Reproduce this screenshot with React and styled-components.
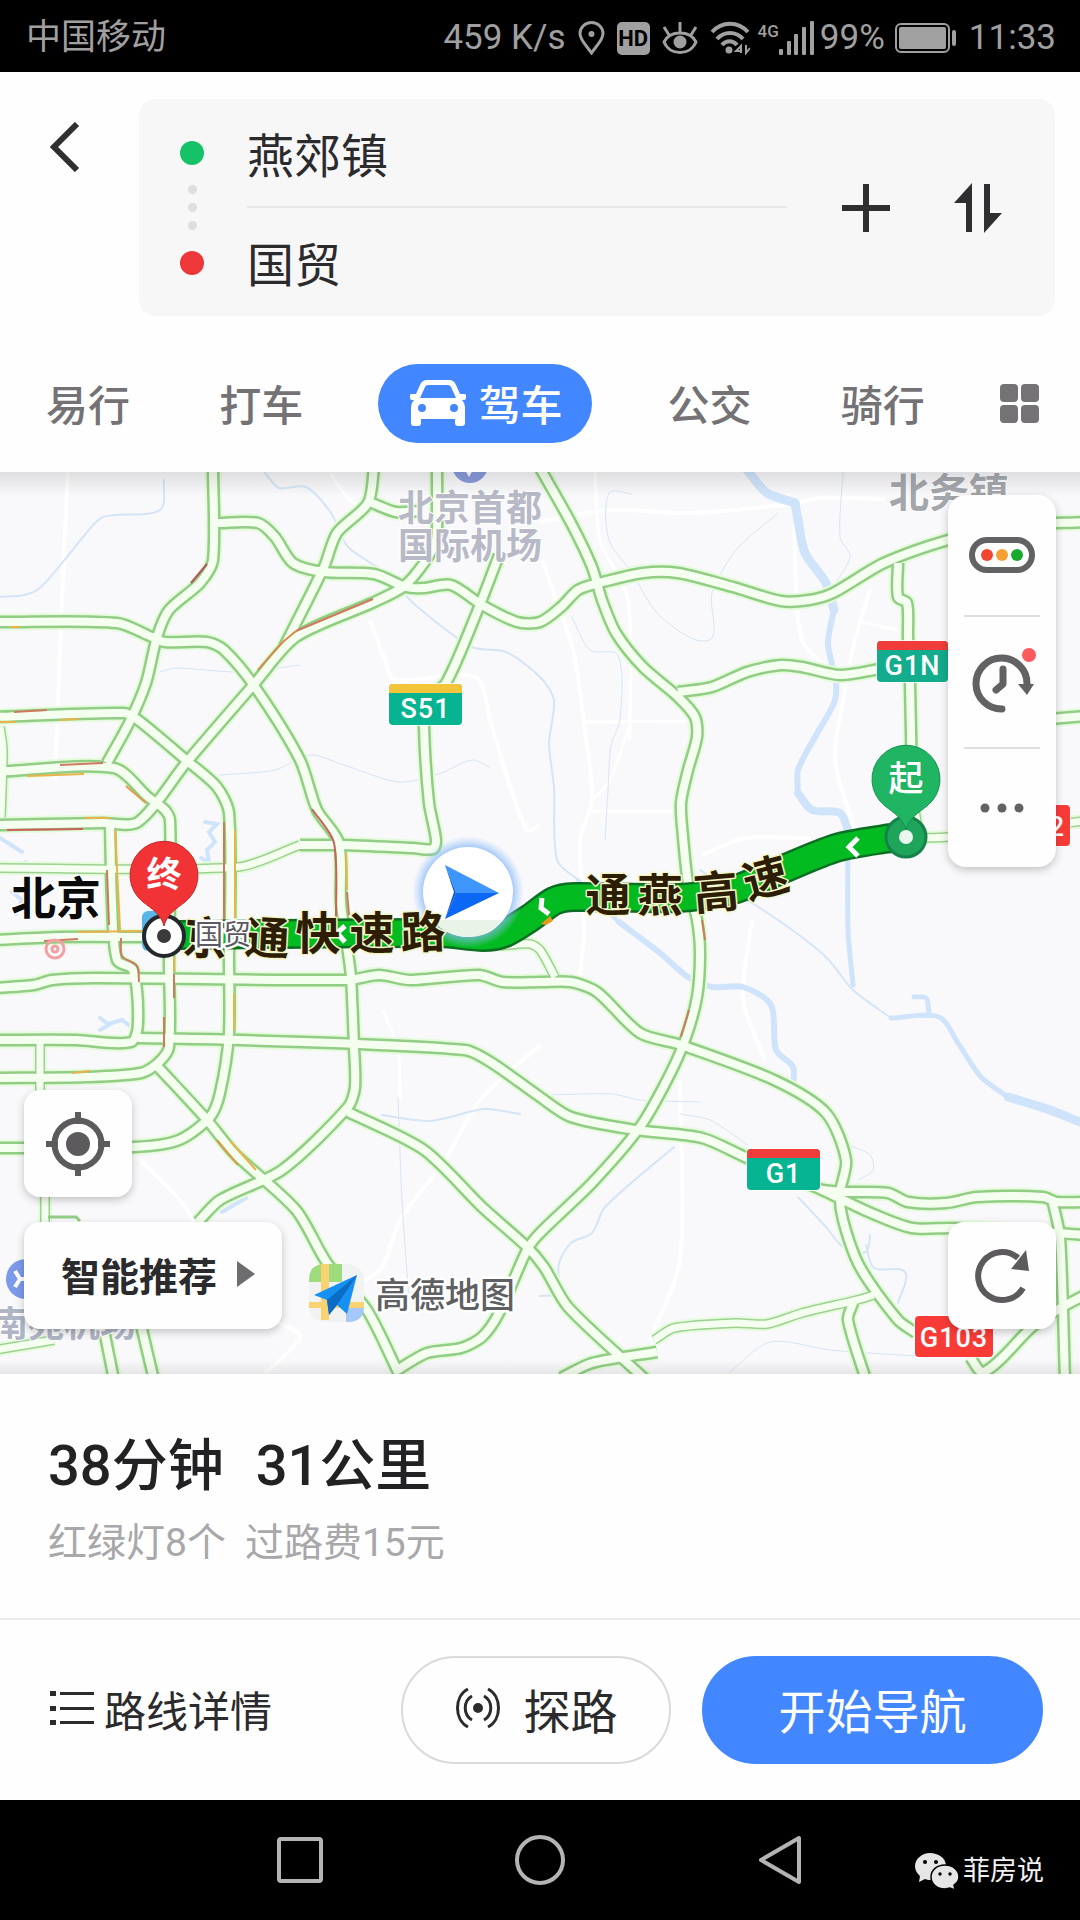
import React from "react";
import styled, { createGlobalStyle } from "styled-components";

const GlobalStyle = createGlobalStyle`
  *, *::before, *::after { box-sizing: border-box; }
  body {
    margin: 0;
    background: #fefefe;
    color: #2b2a2c;
    font-family: Roboto, "Noto Sans CJK SC", sans-serif;
  }
  button, input { font: inherit; color: inherit; }
  svg { display: block; }
`;

const Screen = styled.div`
  display: flex;
  flex-direction: column;
  min-height: 100vh;
`;

const Button = styled.button`
  display: flex;
  align-items: center;
  justify-content: center;
  flex: none;
  margin: 0;
  padding: 0;
  border: 0;
  background: none;
  cursor: pointer;
`;

/* ---------- status bar ---------- */

const StatusBar = styled.div`
  display: flex;
  align-items: center;
  justify-content: space-between;
  height: 72px;
  padding: 4px 24px 0 26px;
  background: #000;
  color: #a0a0a0;
  font-size: 35px;
  line-height: 44px;
  white-space: nowrap;
`;

const StatusGroup = styled.div`
  display: flex;
  align-items: center;
  gap: ${(p) => p.$gap}px;
`;

const HdBadge = styled.span`
  width: 33px;
  height: 33px;
  border-radius: 5px;
  background: #a0a0a0;
  color: #000;
  font-size: 22px;
  font-weight: 700;
  line-height: 33px;
  text-align: center;
`;

const NetworkType = styled.span`
  align-self: flex-start;
  font-size: 17px;
  font-weight: 500;
  line-height: 20px;
`;

/* ---------- header ---------- */

const Header = styled.header`
  display: flex;
  flex-direction: column;
  gap: 48px;
  padding: 27px 25px 29px 32px;
`;

const SearchRow = styled.div`
  display: flex;
  align-items: flex-start;
`;

const BackButton = styled(Button)`
  width: 66px;
  height: 96px;
  margin-right: 41px;
`;

const RouteCard = styled.form`
  display: flex;
  flex: 1;
  min-width: 0;
  align-items: center;
  height: 217px;
  padding: 0 47px 0 41px;
  border-radius: 16px;
  background: #f8f7f8;
`;

const Stops = styled.div`
  display: flex;
  flex-direction: column;
  align-items: center;
  justify-content: space-between;
  height: 134px;
  margin-right: 43px;
`;

const StopDot = styled.span`
  width: 24px;
  height: 24px;
  border-radius: 50%;
  background: ${(p) => p.$color};
`;

const StopTrail = styled.span`
  display: flex;
  flex-direction: column;
  gap: 9px;
`;

const TrailDot = styled.span`
  width: 9px;
  height: 9px;
  border-radius: 50%;
  background: #dedede;
`;

const Fields = styled.div`
  flex: 1;
  min-width: 0;
`;

const PlaceInput = styled.input`
  display: block;
  width: 100%;
  height: 108px;
  padding: 0;
  border: 0;
  border-bottom: ${(p) => (p.$divided ? "2px solid #e8e7e8" : "0")};
  outline: 0;
  background: transparent;
  font-size: 47px;
`;

const CardActions = styled.div`
  display: flex;
  gap: 52px;
  margin-left: 49px;
`;

const IconButton = styled(Button)`
  width: 60px;
  height: 60px;
`;

const Tabs = styled.nav`
  display: flex;
  align-items: center;
  justify-content: space-between;
  padding-right: 16px;
`;

const Tab = styled(Button)`
  gap: 12px;
  height: 79px;
  padding: ${(p) => (p.$active ? "0 30px 2px 32px" : "0 14px 2px")};
  border-radius: 40px;
  background: ${(p) => (p.$active ? "#4287ff" : "none")};
  color: ${(p) => (p.$active ? "#fff" : "#747275")};
  font-size: 42px;
  font-weight: 500;
`;

const MoreModes = styled(Button)`
  display: grid;
  grid-template-columns: 18px 18px;
  gap: 3px;
`;

const Tile = styled.span`
  height: 18px;
  border-radius: 4px;
  background: #747275;
`;

/* ---------- map ---------- */

const MapArea = styled.main`
  position: relative;
  background: #f9f9fb;
`;

const MapCanvas = styled.svg`
  width: 100%;
  height: auto;
`;

const MapLabel = styled.text`
  font-size: ${(p) => p.$size}px;
  font-weight: ${(p) => p.$weight || 700};
  fill: ${(p) => p.$fill};
  stroke: ${(p) => p.$halo || "#fff"};
  stroke-width: ${(p) => p.$haloWidth || 3}px;
  stroke-linejoin: round;
  paint-order: stroke;
  text-anchor: middle;
  dominant-baseline: central;
`;

const ShieldText = styled.text`
  font-size: 27px;
  font-weight: 500;
  letter-spacing: 1px;
  fill: #fff;
  text-anchor: middle;
`;

const TopShade = styled.div`
  position: absolute;
  inset: 0 0 auto;
  height: 24px;
  background: linear-gradient(rgba(60, 60, 60, 0.14), rgba(60, 60, 60, 0));
`;

const BottomShade = styled.div`
  position: absolute;
  inset: auto 0 0;
  height: 14px;
  background: linear-gradient(rgba(60, 60, 60, 0), rgba(60, 60, 60, 0.1));
`;

const Floating = styled.div`
  position: absolute;
  display: flex;
  flex-direction: column;
  gap: 25px;
  left: ${(p) => (p.$side === "left" ? "24px" : "auto")};
  right: ${(p) => (p.$side === "right" ? "24px" : "auto")};
  top: ${(p) => (p.$edge === "top" ? "23px" : "auto")};
  bottom: ${(p) => (p.$edge === "bottom" ? "45px" : "auto")};
`;

const FloatButton = styled(Button)`
  width: ${(p) => (p.$wide ? 258 : 108)}px;
  height: 107px;
  padding: ${(p) => (p.$wide ? "0 0 4px 10px" : "0")};
  gap: 20px;
  border-radius: 16px;
  background: #fefefe;
  box-shadow: 0 3px 8px rgba(0, 0, 0, 0.22);
  font-size: 39px;
  font-weight: 700;
`;

const ToolPanel = styled.div`
  width: 108px;
  padding: 0 16px;
  border-radius: 18px;
  background: #fefefe;
  box-shadow: 0 3px 8px rgba(0, 0, 0, 0.22);
`;

const ToolButton = styled(Button)`
  width: 100%;
  height: ${(p) => (p.$tall ? 132 : 120)}px;
  border-top: ${(p) => (p.$divided ? "2px solid #dedede" : "0")};
`;

/* ---------- summary ---------- */

const Summary = styled.section`
  padding: 57px 48px 0;
  height: 244px;
`;

const SummaryTitle = styled.h1`
  display: flex;
  gap: 32px;
  margin: 0;
  font-size: 56px;
  font-weight: 500;
  line-height: 70px;
  color: #222123;
`;

const SummaryNote = styled.p`
  display: flex;
  gap: 19px;
  margin: 14px 0 0;
  font-size: 39px;
  line-height: 56px;
  color: #a8a7a9;
`;

const Footer = styled.footer`
  display: flex;
  align-items: center;
  gap: 31px;
  padding: 36px 37px 36px 50px;
  border-top: 2px solid #ececec;
`;

const DetailsButton = styled(Button)`
  gap: 10px;
  margin-right: auto;
  padding-bottom: 4px;
  font-size: 42px;
`;

const PillButton = styled(Button)`
  width: ${(p) => (p.$primary ? 341 : 270)}px;
  height: 108px;
  gap: 23px;
  padding-bottom: 4px;
  border: 2px solid ${(p) => (p.$primary ? "#4287ff" : "#dad9de")};
  border-radius: 54px;
  background: ${(p) => (p.$primary ? "#4287ff" : "#fefefe")};
  color: ${(p) => (p.$primary ? "#fff" : "#2b2a2c")};
  font-size: 47px;
`;

const SystemNav = styled.nav`
  position: relative;
  display: flex;
  align-items: center;
  justify-content: center;
  gap: 180px;
  height: 120px;
  background: #000;
`;

const Watermark = styled.div`
  position: absolute;
  right: 36px;
  bottom: 29px;
  display: flex;
  align-items: center;
  gap: 4px;
  color: #f0f0f0;
  font-size: 27px;
  line-height: 40px;
`;

/* ---------- map data ---------- */

// Smooth line through a flat list of x, y pairs.
function curve(flat) {
  const p = [];
  for (let i = 0; i < flat.length; i += 2) p.push([flat[i], flat[i + 1]]);
  let d = `M${p[0][0]} ${p[0][1]}`;
  for (let i = 0; i < p.length - 1; i++) {
    const a = p[i - 1] || p[i];
    const b = p[i];
    const c = p[i + 1];
    const e = p[i + 2] || c;
    const len = Math.hypot(c[0] - b[0], c[1] - b[1]);
    const l1 = Math.hypot(c[0] - a[0], c[1] - a[1]) || 1;
    const l2 = Math.hypot(e[0] - b[0], e[1] - b[1]) || 1;
    const k = len * 0.27;
    d += `C${b[0] + ((c[0] - a[0]) / l1) * k} ${b[1] + ((c[1] - a[1]) / l1) * k} ${
      c[0] - ((e[0] - b[0]) / l2) * k
    } ${c[1] - ((e[1] - b[1]) / l2) * k} ${c[0]} ${c[1]}`;
  }
  return d;
}

const roads = [
  [213, 468, 213, 560, 200, 583, 169, 610, 157, 637, 146, 683, 129, 723, 107, 763],
  [218, 523, 258, 523, 275, 537, 293, 563, 324, 572, 374, 574, 406, 587, 424, 588, 451, 585, 482, 605, 517, 622, 540, 622, 561, 607, 578, 590, 599, 583, 643, 573, 678, 573, 733, 587, 781, 601, 809, 600, 833, 593, 884, 563, 948, 540, 1010, 526, 1085, 522],
  [540, 468, 571, 523, 592, 567, 602, 600, 616, 633, 643, 667, 678, 697, 695, 717, 697, 737, 688, 770, 681, 803, 683, 837, 688, 883, 697, 920, 700, 953, 697, 997, 685, 1040, 667, 1080, 640, 1127, 592, 1183, 540, 1233, 527, 1250, 499, 1313, 482, 1337, 461, 1348, 427, 1353, 394, 1372],
  [374, 468, 368, 503, 337, 533, 324, 567, 289, 637, 284, 647],
  [372, 503, 396, 512, 420, 511],
  [437, 468, 437, 507, 436, 540, 424, 563, 403, 587, 372, 603, 296, 637, 255, 683, 186, 763, 138, 822, 103, 823, -5, 825],
  [499, 555, 479, 607, 446, 683, 426, 700, 424, 727, 429, 803, 436, 840, 433, 849, 413, 848, 341, 845, 300, 845],
  [-5, 622, 117, 623, 152, 637, 165, 642, 207, 642, 224, 650, 255, 687, 300, 760, 317, 810, 339, 843, 341, 903, 348, 953, 351, 977, 354, 1047, 355, 1087, 348, 1107, 282, 1170, 220, 1200, 198, 1222],
  [-5, 717, 124, 713, 138, 720, 186, 760, 217, 787, 229, 813, 230, 930, 229, 953, 229, 1033, 220, 1093, 210, 1117, 179, 1140, 134, 1147, -5, 1148],
  [-5, 772, 114, 768, 148, 797, 165, 810, 170, 820, 170, 900, 169, 960, 169, 1047, 158, 1063, 141, 1073, 86, 1077, -5, 1078],
  [110, 823, 112, 903, 117, 960, 133, 970, 138, 1023, 131, 1042, 76, 1040, -5, 1040],
  [-5, 940, 60, 937, 155, 937],
  [-5, 988, 34, 985, 52, 980, 96, 978, 348, 980, 379, 975, 410, 980, 479, 975, 503, 982, 540, 982, 571, 982, 597, 992, 640, 1033, 681, 1045, 774, 1080, 826, 1113, 846, 1160, 840, 1193, 843, 1220, 860, 1267, 898, 1320, 916, 1333],
  [138, 1038, 241, 1040, 465, 1050, 492, 1063, 540, 1097, 571, 1117, 636, 1130, 702, 1138, 745, 1157, 822, 1190, 871, 1213, 912, 1228, 953, 1228, 1057, 1233, 1085, 1235],
  [822, 1190, 846, 1192, 888, 1193, 908, 1202, 946, 1203, 977, 1197, 1043, 1197, 1057, 1202, 1085, 1202],
  [1053, 1203, 1060, 1237, 1065, 1380],
  [158, 1067, 207, 1120, 234, 1153, 296, 1210, 327, 1263, 367, 1310, 398, 1372],
  [348, 1112, 424, 1150, 482, 1207, 527, 1247, 544, 1267, 568, 1307, 646, 1380],
  [561, 1378, 592, 1363, 657, 1352],
  [853, 1303, 848, 1320, 866, 1380],
  [970, 1357, 984, 1372, 1032, 1327, 1057, 1310, 1085, 1295],
  [105, 1335, 114, 1380],
  [141, 1325, 154, 1380],
  [898, 563, 898, 597, 907, 603, 908, 637, 910, 683, 912, 790],
  [678, 692, 712, 687, 747, 672, 781, 665, 802, 667, 840, 675, 880, 669],
  [1050, 719, 1085, 716],
];

const minorRoads = [
  [300, 845, 238, 867, -5, 868],
  [654, 1340, 674, 1328, 736, 1323, 767, 1324, 802, 1313, 857, 1300, 874, 1295],
  [40, 1043, 40, 1092],
  [45, 1190, 45, 1224],
  [0, 727, 3, 750, 1, 817],
  [-5, 1350, 54, 1340],
  [500, 946, 530, 944, 540, 950, 555, 977],
  [920, 838, 948, 837, 1085, 821],
  [912, 790, 918, 830],
];

const traffic = [
  ["#cf7a60", [296, 631, 373, 599]],
  ["#d98a4e", [258, 670, 282, 643, 296, 631]],
  ["#b5555a", [191, 583, 207, 564]],
  ["#c9635c", [312, 809, 334, 843, 336, 925]],
  ["#eab24c", [346, 853, 347, 890]],
  ["#cf7a60", [347, 892, 349, 915]],
  ["#eab24c", [235, 830, 235, 925]],
  ["#cf7a60", [224, 822, 224, 925]],
  ["#eab24c", [234, 993, 234, 1030]],
  ["#eab24c", [115, 830, 120, 930]],
  ["#cf7a60", [107, 870, 109, 925]],
  ["#cf7a60", [121, 938, 122, 956, 137, 966, 139, 982]],
  ["#eab24c", [174, 957, 174, 972]],
  ["#cf7a60", [174, 974, 174, 998]],
  ["#cf7a60", [164, 1017, 164, 1047]],
  ["#eab24c", [230, 1141, 256, 1170]],
  ["#e09a4c", [217, 1140, 238, 1165]],
  ["#cf7a60", [14, 712, 47, 710]],
  ["#eab24c", [60, 720, 78, 719]],
  ["#eab24c", [0, 722, 16, 722]],
  ["#cf7a60", [60, 765, 103, 763]],
  ["#eab24c", [27, 776, 84, 774]],
  ["#e09a4c", [126, 786, 146, 803]],
  ["#c9635c", [7, 830, 83, 829]],
  ["#eab24c", [84, 818, 110, 818]],
  ["#cf7a60", [702, 920, 705, 940]],
  ["#cf7a60", [689, 1010, 681, 1037]],
  ["#cf7a60", [44, 941, 78, 939]],
  ["#eab24c", [78, 932, 145, 931]],
  ["#eab24c", [72, 1073, 90, 1071]],
  ["#eab24c", [10, 627, 20, 627]],
];

const rivers = [
  [9, [747, 470, 767, 493, 795, 503]],
  [9, [795, 503, 798, 520, 805, 553, 826, 583, 834, 610]],
  [6, [834, 610, 828, 643, 836, 683, 834, 703, 815, 737, 798, 770, 798, 793]],
  [8, [798, 793, 812, 810, 840, 813, 848, 830]],
  [5, [848, 830, 848, 930, 853, 985]],
  [4, [578, 880, 600, 905, 619, 922]],
  [6, [619, 922, 660, 953, 688, 977, 712, 987, 743, 987, 771, 1005, 776, 1050, 793, 1067, 793, 1090]],
  [2, [700, 870, 778, 920, 826, 957, 853, 990, 891, 1018]],
  [5, [891, 1018, 939, 1017, 958, 1043, 981, 1077, 1008, 1097]],
  [9, [1008, 1097, 1050, 1110, 1085, 1124]],
  [5, [929, 1013, 926, 998, 914, 997]],
  [2, [164, 480, 160, 510, 103, 517, 83, 537, 71, 552, 41, 587, 24, 595, 0, 597]],
  [2, [265, 473, 279, 488, 306, 487, 331, 513, 348, 547, 386, 573, 413, 603, 472, 647, 506, 652, 540, 677, 554, 700, 549, 743, 554, 787, 557, 860, 578, 880]],
  [1, [220, 775, 275, 770, 310, 755, 344, 765, 399, 782, 441, 773, 472, 760, 489, 767]],
  [1, [160, 672, 175, 668, 240, 672, 300, 665]],
  [1, [632, 494, 609, 493, 609, 540, 630, 570, 661, 617, 709, 640, 712, 593, 736, 550, 778, 513]],
  [1, [843, 473, 840, 537, 850, 557, 833, 587]],
  [1, [572, 617, 590, 650, 618, 655, 620, 720, 611, 745, 608, 790, 605, 840]],
  [2, [674, 1147, 605, 1207, 592, 1233, 571, 1243, 559, 1263, 557, 1293, 540, 1296]],
  [2, [798, 1197, 826, 1227, 843, 1247, 866, 1252, 870, 1235]],
  [2, [866, 1245, 874, 1268, 905, 1272, 898, 1303]],
  [1, [793, 1090, 826, 1102, 846, 1142, 870, 1155, 873, 1170, 858, 1180]],
  [1, [545, 1095, 612, 1094, 640, 1100, 700, 1102]],
  [1, [680, 1114, 710, 1120, 748, 1145]],
  [2, [382, 1115, 430, 1121, 484, 1109, 520, 1114]],
  [1, [398, 1098, 402, 1200, 409, 1300]],
  [1, [730, 1372, 770, 1342, 830, 1350, 915, 1356]],
];

const lanes = [
  [3, [68, 470, 62, 600, 55, 780]],
  [2, [330, 473, 350, 500, 372, 510]],
  [3, [370, 620, 385, 660, 395, 680, 475, 677, 490, 720, 505, 770, 527, 830, 540, 825]],
  [3, [540, 522, 610, 510, 690, 513, 790, 504, 820, 498, 885, 499]],
  [2, [595, 470, 600, 540, 628, 600, 630, 740]],
  [3, [542, 560, 573, 650, 585, 730, 592, 800, 580, 840, 584, 930, 580, 975]],
  [2, [582, 722, 700, 721]],
  [2, [590, 811, 680, 811]],
  [2, [592, 800, 610, 780, 630, 725]],
  [3, [795, 506, 795, 560, 802, 640, 830, 670]],
  [3, [870, 590, 855, 640, 845, 690, 835, 760, 855, 830]],
  [2, [862, 622, 905, 632]],
  [3, [752, 920, 743, 1000, 765, 1060]],
  [3, [680, 1080, 680, 1260, 650, 1340]],
  [3, [540, 1045, 480, 1100, 445, 1160, 400, 1220, 380, 1270, 340, 1290]],
  [3, [270, 1320, 300, 1335, 290, 1350, 265, 1374]],
  [2, [383, 1010, 398, 1050, 400, 1100]],
  [3, [140, 1160, 180, 1200, 195, 1222]],
  [3, [702, 855, 745, 838, 810, 838]],
];

const routePath = curve([905, 837, 884, 839, 836, 848, 781, 870, 733, 890, 678, 898, 574, 897, 554, 901, 530, 918, 505, 933, 483, 937, 440, 933, 164, 935]);

const routeLetters = [
  ["京", 206, 939, 5],
  ["通", 267, 939, 3],
  ["快", 318, 934, 0],
  ["速", 372, 934, 0],
  ["路", 423, 933, -2],
  ["通", 608, 896, 0],
  ["燕", 660, 896, 0],
  ["高", 716, 893, -5],
  ["速", 766, 879, -15],
];

const placeLabels = [
  ["北京首都", 470, 509, 36, "#b7bac6"],
  ["国际机场", 470, 547, 36, "#b7bac6"],
  ["北务镇", 949, 493, 40, "#a3a6ab"],
  ["南苑机场", 64, 1325, 36, "#b0b5c6"],
];

const shields = [
  { x: 389, y: 684, w: 73, label: "S51", cap: "#f4c53a", body: "#06b491" },
  { x: 877, y: 641, w: 71, label: "G1N", cap: "#f03d3b", body: "#13ac8d" },
  { x: 747, y: 1149, w: 73, label: "G1", cap: "#f03d3b", body: "#06b491" },
  { x: 915, y: 1316, w: 78, label: "G103", body: "#f93b38" },
  { x: 992, y: 805, w: 78, label: "G102", body: "#f93b38" },
];

function Shield({ x, y, w, label, cap, body }) {
  return (
    <g>
      <rect x={x - 1} y={y - 1} width={w + 2} height={43} rx="5" fill="#fff" opacity="0.8" />
      <rect x={x} y={y} width={w} height={41} rx="4" fill={body} />
      {cap && <path d={`M${x} ${y + 9}V${y + 4}q0-4 4-4h${w - 8}q4 0 4 4v5z`} fill={cap} />}
      <ShieldText x={x + w / 2} y={y + (cap ? 34 : 31)}>
        {label}
      </ShieldText>
    </g>
  );
}

function Lines({ list, color, width }) {
  return (
    <g fill="none" stroke={color} strokeWidth={width} strokeLinejoin="round">
      {list.map((r, i) => (
        <path key={i} d={curve(r)} />
      ))}
    </g>
  );
}

function RouteMap() {
  return (
    <MapCanvas viewBox="0 472 1080 902" role="img" aria-label="路线地图">
      <defs>
        <radialGradient id="locator-glow">
          <stop offset="0.75" stopColor="#7fb2f8" stopOpacity="0.9" />
          <stop offset="1" stopColor="#9fc8fb" stopOpacity="0" />
        </radialGradient>
      </defs>
      <rect x="0" y="472" width="1080" height="902" fill="#f9f9fb" />
      <g fill="none" stroke="#fff">
        {lanes.map(([w, pts], i) => (
          <path key={i} d={curve(pts)} strokeWidth={w + 1} />
        ))}
      </g>
      <g fill="none" stroke="#cfe4fb" strokeLinecap="round">
        {rivers.map(([w, pts], i) => (
          <path key={i} d={curve(pts)} strokeWidth={w} stroke={w < 3 ? "#d6e5f6" : "#cfe4fb"} />
        ))}
        <path
          d="M205 822l12 2-8 8 6 10-8 8 2 12-8-4M100 1018l8 6 14-4 8 6M100 1030l10-6M222 1212l24-14M0 838l22 14M12 892l10 8-6 14M26 862l-8 8"
          strokeWidth="4"
        />
      </g>

      <Lines list={minorRoads} color="#e6fbde" width={14} />
      <Lines list={roads} color="#e6fbde" width={17} />
      <Lines list={minorRoads} color="#9dd190" width={10} />
      <Lines list={roads} color="#92cd85" width={13} />
      <Lines list={minorRoads} color="#f5ffef" width={7} />
      <Lines list={roads} color="#f5ffef" width={8} />
      <path d="M48 1217h28l4 4" fill="none" stroke="#92cd85" strokeWidth="3" />
      <g fill="none" strokeWidth="2">
        {traffic.map(([color, pts], i) => (
          <path key={i} d={curve(pts)} stroke={color} />
        ))}
      </g>

      {placeLabels.map(([text, x, y, size, fill]) => (
        <MapLabel key={text} x={x} y={y} $size={size} $fill={fill} $haloWidth={2}>
          {text}
        </MapLabel>
      ))}
      <circle cx="470" cy="465" r="18" fill="#8799dc" />
      <path d="M465 470l4 7 4-7" fill="#fff" />
      <circle cx="26" cy="1279" r="20" fill="#7b9aea" />
      <path d="M15 1271l5 8-5 8M20 1279h8" fill="none" stroke="#fff" strokeWidth="4" />
      <g fill="none" stroke="#f2a0a2">
        <circle cx="55" cy="949" r="9" strokeWidth="3" />
        <circle cx="55" cy="949" r="3" strokeWidth="3" />
      </g>

      {shields.map((s) => (
        <Shield key={s.label} {...s} />
      ))}

      <rect x="142" y="911" width="20" height="40" rx="6" fill="#59b4e8" />
      <path d={routePath} fill="none" stroke="#0b6e22" strokeWidth="30" />
      <path d={routePath} fill="none" stroke="#02bb20" strokeWidth="25" />
      <g fill="none" stroke="#fff" strokeWidth="5">
        <path d="M858 838l-9 9 9 9M542 898l-1 10 8 6M345 926l-8 7 8 9" />
      </g>
      <path d="M541 924l9-8 3 5-7 4z" fill="#e7981f" />

      <circle cx="468" cy="892" r="56" fill="url(#locator-glow)" />
      <circle cx="468" cy="892" r="45" fill="#fff" />
      <path d="M434 920h68c-7 12-20 17-34 17s-28-7-34-17z" fill="#e9f3e8" />
      <path d="M445 865l54 28h-43z" fill="#3e95fb" />
      <path d="M445 919l54-26h-43z" fill="#0a68f5" />
      <path d="M445 865l11 28-11 26 9-27z" fill="#0f56c8" />

      {routeLetters.map(([text, x, y, turn], i) => (
        <MapLabel
          key={i}
          x={x}
          y={y}
          transform={`rotate(${turn} ${x} ${y})`}
          $size={45}
          $fill="#2c1d04"
          $halo="#f3f5c8"
          $haloWidth={3}
        >
          {text}
        </MapLabel>
      ))}

      <MapLabel x="56" y="899" $size={45} $fill="#0a0a0a">
        北京
      </MapLabel>
      <MapLabel x="223" y="935" $size={28} $weight={400} $fill="#5c5a60" $haloWidth={5}>
        国贸
      </MapLabel>

      <circle cx="164" cy="936" r="20" fill="#fff" stroke="#25272b" strokeWidth="4" />
      <circle cx="164" cy="936" r="7" fill="#3b3b3d" />
      <path d="M164 926c-3-12-12-17-21-24a34 34 0 1 1 42 0c-9 7-18 12-21 24z" fill="#f13336" stroke="#c42a2c" />
      <MapLabel x="164" y="875" $size={35} $fill="#fff" $halo="none">
        终
      </MapLabel>

      <circle cx="906" cy="837" r="20" fill="#1fa45c" stroke="#14834a" strokeWidth="3" />
      <path d="M906 830c-3-12-12-17-21-24a34 34 0 1 1 42 0c-9 7-18 12-21 24z" fill="#20b562" stroke="#149152" />
      <circle cx="906" cy="837" r="7" fill="#e9f7ee" />
      <MapLabel x="906" y="779" $size={35} $weight={500} $fill="#fff" $halo="none">
        起
      </MapLabel>

      <g>
        <rect x="309" y="1264" width="55" height="58" rx="16" fill="#f1f3f2" />
        <path d="M309 1282v-2q0-16 16-16h17v18z" fill="#9ddb7c" />
        <path d="M346 1306h18q0 16-16 16h-2z" fill="#a6c8f8" />
        <path d="M309 1302h55v6h-55zM321 1264h8v56h-8z" fill="#fbd272" />
        <path d="M357 1275l-43 20 13 5 2 15 8-10 10 9z" fill="#1690f3" />
        <path d="M357 1275l-30 25 2 15 8-10z" fill="#0b6cc4" />
      </g>
      <MapLabel x="445" y="1296" $size={35} $weight={500} $fill="#5f6063" $haloWidth={5}>
        高德地图
      </MapLabel>
    </MapCanvas>
  );
}

/* ---------- icons ---------- */

const LocationIcon = () => (
  <svg width="27" height="34" viewBox="0 0 27 34" fill="none" stroke="#a0a0a0" strokeWidth="3">
    <path d="M13.500 32C8 24 2 19 2 12.500a11.500 11 0 0 1 23 0C25 19 19 24 13.500 32z" />
    <circle cx="13.500" cy="13" r="3" fill="#a0a0a0" stroke="none" />
  </svg>
);

const EyeIcon = () => (
  <svg width="36" height="34" viewBox="0 0 36 34" fill="none" stroke="#a0a0a0" strokeWidth="3">
    <path d="M2 21C8 9 28 9 34 21 28 35 8 35 2 21zM18 11V1M7 14L2 6M29 14l5-8" />
    <circle cx="18" cy="21" r="6.500" fill="#a0a0a0" stroke="none" />
  </svg>
);

const WifiIcon = () => (
  <svg width="40" height="34" viewBox="0 0 40 34" fill="none" stroke="#a0a0a0" strokeWidth="4">
    <path d="M2 11C12 0 28 0 38 11M7 18C14 10 26 10 33 18M12 24c4-5 11-5 15 0" />
    <circle cx="19" cy="29" r="3.500" fill="#a0a0a0" stroke="none" />
    <path d="M31 32v-7l-5 5h5M36 24v8l4-5" strokeWidth="2" />
  </svg>
);

const SignalIcon = () => (
  <svg width="36" height="34" viewBox="0 0 36 34" fill="#a0a0a0">
    <rect x="0" y="28" width="4" height="6" rx="1" />
    <rect x="8" y="20" width="4" height="14" rx="1" />
    <rect x="15" y="13" width="4" height="21" rx="1" />
    <rect x="23" y="6" width="4" height="28" rx="1" />
    <rect x="31" y="0" width="4" height="34" rx="1" />
  </svg>
);

const BatteryIcon = () => (
  <svg width="62" height="30" viewBox="0 0 62 30" fill="#a0a0a0">
    <rect x="1" y="1" width="53" height="28" rx="5" fill="none" stroke="#a0a0a0" strokeWidth="2" />
    <rect x="4" y="4" width="47" height="22" rx="2" />
    <rect x="57" y="7" width="4" height="16" rx="2" />
  </svg>
);

const CarIcon = () => (
  <svg width="56" height="46" viewBox="0 0 56 46">
    <path
      fill="#fff"
      fillRule="evenodd"
      d="M17 0h22q5 0 7 5l4 9h5q1 0 1 2v2q0 2-2 2h-2q3 3 3 7v16q0 3-3 3h-4q-3 0-3-3v-4H11v4q0 3-3 3H4q-3 0-3-3V27q0-4 3-7H2q-2 0-2-2v-2q0-2 1-2h5l4-9q2-5 7-5zm1 5q-2 0-3 2l-5 11h36L41 7q-1-2-3-2zM12 24a4 4 0 1 0 0 8 4 4 0 0 0 0-8zm32 0a4 4 0 1 0 0 8 4 4 0 0 0 0-8z"
    />
  </svg>
);

const TrafficLightIcon = () => (
  <svg width="66" height="36" viewBox="0 0 66 36">
    <rect x="3" y="3" width="60" height="30" rx="15" fill="none" stroke="#626163" strokeWidth="6" />
    <circle cx="18" cy="18" r="6" fill="#f1482f" />
    <circle cx="33" cy="18" r="6" fill="#f5a032" />
    <circle cx="48" cy="18" r="6" fill="#19a92e" />
  </svg>
);

const ClockIcon = () => (
  <svg width="68" height="68" viewBox="0 0 68 68" fill="none" stroke="#626163" strokeWidth="7">
    <path d="M34 61A25.500 25.500 0 1 1 59 36" strokeLinecap="round" />
    <path d="M35 21v15l-7 6" strokeLinecap="round" strokeLinejoin="round" />
    <path d="M50 36h16l-7 11z" fill="#626163" stroke="none" />
    <circle cx="61" cy="7" r="7" fill="#fd5a5d" stroke="none" />
  </svg>
);

const DotsIcon = () => (
  <svg width="44" height="10" viewBox="0 0 44 10" fill="#626163">
    <circle cx="5" cy="5" r="4.500" />
    <circle cx="22" cy="5" r="4.500" />
    <circle cx="39" cy="5" r="4.500" />
  </svg>
);

const LocateIcon = () => (
  <svg width="64" height="64" viewBox="0 0 64 64" fill="none" stroke="#5c5a5c">
    <circle cx="32" cy="32" r="23.500" strokeWidth="6" />
    <circle cx="32" cy="32" r="12" fill="#5c5a5c" stroke="none" />
    <path d="M32 0v12M32 52v12M0 32h12M52 32h12" strokeWidth="6" />
  </svg>
);

const RefreshIcon = () => (
  <svg width="56" height="56" viewBox="0 0 56 56">
    <path d="M49 40A24 24 0 1 1 44 10" fill="none" stroke="#5c5a5c" strokeWidth="6" />
    <path d="M52 2l3 21-18-2z" fill="#5c5a5c" />
  </svg>
);

const WeChatIcon = () => (
  <svg width="44" height="38" viewBox="0 0 44 38">
    <path d="M15 1C7 1 0 7 0 14c0 5 3 8 5 10l-1 6 6-3c2 1 4 1 7 1 8 0 14-6 14-14S23 1 15 1z" fill="#e6e6e6" />
    <path
      d="M30 13c-8 0-14 5-14 12s6 12 14 12l5-1 5 2-1-5c3-2 5-5 5-8 0-7-6-12-14-12z"
      fill="#e6e6e6"
      stroke="#000"
      strokeWidth="1.500"
    />
    <g fill="#000">
      <circle cx="10" cy="10" r="2" />
      <circle cx="21" cy="10" r="2" />
      <circle cx="25" cy="22" r="1.700" />
      <circle cx="35" cy="22" r="1.700" />
    </g>
  </svg>
);

export default function App() {
  return (
    <Screen>
      <GlobalStyle />

      <StatusBar>
        <span>中国移动</span>
        <StatusGroup $gap={12}>
          <span>459 K/s</span>
          <LocationIcon />
          <HdBadge>HD</HdBadge>
          <EyeIcon />
          <StatusGroup $gap={8}>
            <WifiIcon />
            <StatusGroup $gap={5}>
              <StatusGroup $gap={0}>
                <NetworkType>4G</NetworkType>
                <SignalIcon />
              </StatusGroup>
              <StatusGroup $gap={10}>
                <span>99%</span>
                <BatteryIcon />
              </StatusGroup>
            </StatusGroup>
          </StatusGroup>
          <span>11:33</span>
        </StatusGroup>
      </StatusBar>

      <Header>
        <SearchRow>
          <BackButton type="button" aria-label="返回">
            <svg width="30" height="50" viewBox="0 0 30 50" fill="none" stroke="#2f2e30" strokeWidth="6">
              <path d="M27 2L4 25l23 23" />
            </svg>
          </BackButton>
          <RouteCard>
            <Stops>
              <StopDot $color="#15c268" />
              <StopTrail>
                <TrailDot />
                <TrailDot />
                <TrailDot />
              </StopTrail>
              <StopDot $color="#ee3739" />
            </Stops>
            <Fields>
              <PlaceInput aria-label="起点" defaultValue="燕郊镇" $divided />
              <PlaceInput aria-label="终点" defaultValue="国贸" />
            </Fields>
            <CardActions>
              <IconButton type="button" aria-label="添加途经点">
                <svg width="48" height="48" viewBox="0 0 48 48" stroke="#2f2e30" strokeWidth="6">
                  <path d="M24 0v48M0 24h48" />
                </svg>
              </IconButton>
              <IconButton type="button" aria-label="交换起终点">
                <svg width="48" height="50" viewBox="0 0 48 50" fill="#2f2e30">
                  <path d="M18 0v49h-6V20H0zM30 1h6v29h12L30 50z" />
                </svg>
              </IconButton>
            </CardActions>
          </RouteCard>
        </SearchRow>

        <Tabs>
          <Tab type="button">易行</Tab>
          <Tab type="button">打车</Tab>
          <Tab type="button" $active>
            <CarIcon />
            驾车
          </Tab>
          <Tab type="button">公交</Tab>
          <Tab type="button">骑行</Tab>
          <MoreModes type="button" aria-label="更多出行方式">
            <Tile />
            <Tile />
            <Tile />
            <Tile />
          </MoreModes>
        </Tabs>
      </Header>

      <MapArea>
        <RouteMap />
        <TopShade />
        <BottomShade />
        <Floating $side="right" $edge="top">
          <ToolPanel>
            <ToolButton type="button" aria-label="路况">
              <TrafficLightIcon />
            </ToolButton>
            <ToolButton type="button" aria-label="未来用时" $divided $tall>
              <ClockIcon />
            </ToolButton>
            <ToolButton type="button" aria-label="更多" $divided>
              <DotsIcon />
            </ToolButton>
          </ToolPanel>
        </Floating>
        <Floating $side="left" $edge="bottom">
          <FloatButton type="button" aria-label="定位">
            <LocateIcon />
          </FloatButton>
          <FloatButton type="button" $wide>
            智能推荐
            <svg width="18" height="26" viewBox="0 0 18 26" fill="#6d6c6e">
              <path d="M0 0l18 13L0 26z" />
            </svg>
          </FloatButton>
        </Floating>
        <Floating $side="right" $edge="bottom">
          <FloatButton type="button" aria-label="刷新">
            <RefreshIcon />
          </FloatButton>
        </Floating>
      </MapArea>

      <Summary>
        <SummaryTitle>
          <span>38分钟</span>
          <span>31公里</span>
        </SummaryTitle>
        <SummaryNote>
          <span>红绿灯8个</span>
          <span>过路费15元</span>
        </SummaryNote>
      </Summary>

      <Footer>
        <DetailsButton type="button">
          <svg width="44" height="34" viewBox="0 0 44 34" fill="#2b2a2c">
            <path d="M0 0h6v5H0zM0 15h6v5H0zM0 29h6v5H0zM10 1h34v3H10zM10 16h34v3H10zM10 30h34v3H10z" />
          </svg>
          路线详情
        </DetailsButton>
        <PillButton type="button">
          <svg width="46" height="42" viewBox="0 0 46 42" fill="none" stroke="#2b2a2c" strokeWidth="3">
            <circle cx="23" cy="21" r="5" fill="#2b2a2c" stroke="none" />
            <path d="M13 2C-1 9-1 33 13 40M17 9c-9 5-9 19 0 24M33 2c14 7 14 31 0 38M29 9c9 5 9 19 0 24" />
          </svg>
          探路
        </PillButton>
        <PillButton type="button" $primary>
          开始导航
        </PillButton>
      </Footer>

      <SystemNav aria-label="系统导航">
        <IconButton type="button" aria-label="最近任务">
          <svg width="46" height="46" viewBox="0 0 46 46" fill="none" stroke="#b5b3b5" strokeWidth="4">
            <rect x="2" y="2" width="42" height="42" rx="2" />
          </svg>
        </IconButton>
        <IconButton type="button" aria-label="主页">
          <svg width="50" height="50" viewBox="0 0 50 50" fill="none" stroke="#b5b3b5" strokeWidth="4">
            <circle cx="25" cy="25" r="23" />
          </svg>
        </IconButton>
        <IconButton type="button" aria-label="后退">
          <svg width="44" height="50" viewBox="0 0 44 50" fill="none" stroke="#b5b3b5" strokeWidth="4" strokeLinejoin="round">
            <path d="M41 3v44L3 25z" />
          </svg>
        </IconButton>
        <Watermark>
          <WeChatIcon />
          菲房说
        </Watermark>
      </SystemNav>
    </Screen>
  );
}
